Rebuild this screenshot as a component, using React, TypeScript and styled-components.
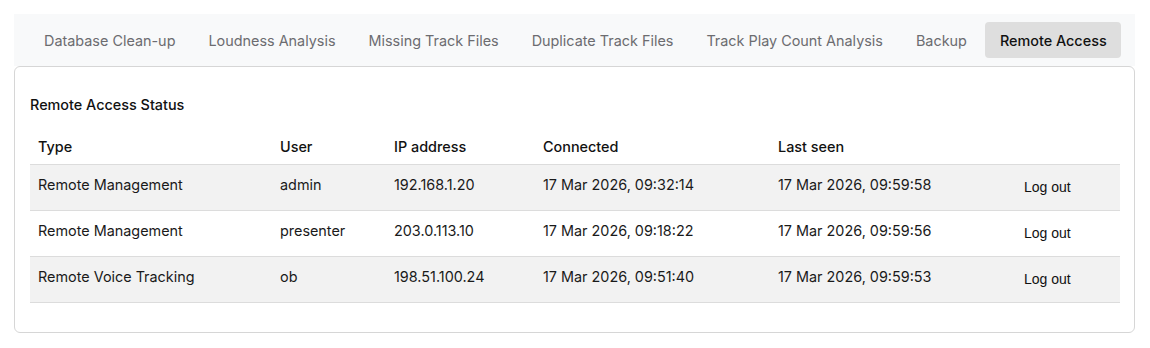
import React from "react";
import styled, { createGlobalStyle } from "styled-components";

const Global = createGlobalStyle`
  html, body { margin: 0; padding: 0; background: #fff; }
  body { font-family: Inter, "Noto Sans", sans-serif; color: #212529; }
`;

const Page = styled.div`
  padding: 14px 15px 0 14px;
`;

const TabBar = styled.nav`
  display: flex;
  gap: 4px;
  background: #f8f9fa;
  padding: 8px 15px;
`;

const Tab = styled.button<{ $active?: boolean }>`
  font-family: Inter, "Noto Sans", sans-serif;
  font-size: 14.4px;
  font-weight: ${(p) => (p.$active ? 500 : 400)};
  color: ${(p) => (p.$active ? "#111" : "#6c6c70")};
  background: ${(p) => (p.$active ? "#dedede" : "transparent")};
  border: none;
  border-radius: 4px;
  height: 36px;
  padding: 0 14px 0 15px;
  cursor: pointer;
  white-space: nowrap;
`;

const Card = styled.section`
  border: 1px solid #d6d6d6;
  border-radius: 6px;
  padding: 26px 15px 29px 15px;
`;

const Title = styled.h3`
  margin: 0 0 7px 0;
  font-size: 14.4px;
  font-weight: 500;
  line-height: 24px;
  color: #111;
`;

const Table = styled.table`
  width: 100%;
  border-collapse: collapse;
  table-layout: fixed;
  font-size: 14.4px;
`;

const Th = styled.th`
  text-align: left;
  font-weight: 500;
  color: #111;
  padding: 11px 8px 5px 8px;
  line-height: 24px;
  border-bottom: 1px solid #dcdcdc;
`;

const Row = styled.tr<{ $striped?: boolean }>`
  background: ${(p) => (p.$striped ? "#f2f2f2" : "#fff")};
`;

const Td = styled.td`
  vertical-align: top;
  padding: 8px 8px;
  line-height: 24px;
  color: #1a1a1a;
  border-bottom: 1px solid #dcdcdc;
  white-space: nowrap;
`;

const LogOut = styled.button`
  font-family: "Liberation Sans", Arial, sans-serif;
  font-size: 14px;
  color: #111;
  background: transparent;
  border: none;
  height: 29px;
  padding: 0 0 2px 0;
  cursor: pointer;
`;

const tabs = [
  "Database Clean-up",
  "Loudness Analysis",
  "Missing Track Files",
  "Duplicate Track Files",
  "Track Play Count Analysis",
  "Backup",
  "Remote Access",
];

const sessions = [
  ["Remote Management", "admin", "192.168.1.20", "17 Mar 2026, 09:32:14", "17 Mar 2026, 09:59:58"],
  ["Remote Management", "presenter", "203.0.113.10", "17 Mar 2026, 09:18:22", "17 Mar 2026, 09:59:56"],
  ["Remote Voice Tracking", "ob", "198.51.100.24", "17 Mar 2026, 09:51:40", "17 Mar 2026, 09:59:53"],
];

const widths = [242, 114, 149, 235, 246, 104];

export default function App() {
  return (
    <Page>
      <Global />
      <TabBar>
        {tabs.map((t) => (
          <Tab key={t} $active={t === "Remote Access"}>
            {t}
          </Tab>
        ))}
      </TabBar>
      <Card>
        <Title>Remote Access Status</Title>
        <Table>
          <colgroup>
            {widths.map((w, i) => (
              <col key={i} style={{ width: w }} />
            ))}
          </colgroup>
          <thead>
            <tr>
              <Th>Type</Th>
              <Th>User</Th>
              <Th>IP address</Th>
              <Th>Connected</Th>
              <Th>Last seen</Th>
              <Th />
            </tr>
          </thead>
          <tbody>
            {sessions.map((s, i) => (
              <Row key={i} $striped={i % 2 === 0}>
                {s.map((c, j) => (
                  <Td key={j}>{c}</Td>
                ))}
                <Td>
                  <LogOut>Log out</LogOut>
                </Td>
              </Row>
            ))}
          </tbody>
        </Table>
      </Card>
    </Page>
  );
}
